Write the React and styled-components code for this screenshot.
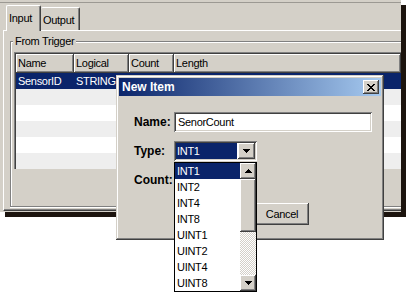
import styled, { createGlobalStyle, css } from 'styled-components'

const FACE = '#d4d0c8'
const NAVY = '#0a246a'

const GlobalStyle = createGlobalStyle`
  html, body {
    margin: 0;
    padding: 0;
    background: #fff;
  }
  body {
    font-family: "Liberation Sans", Arial, sans-serif;
    font-size: 11px;
    letter-spacing: -0.3px;
    color: #000;
  }
  * {
    box-sizing: border-box;
  }
`

const raised = css`
  background: ${FACE};
  box-shadow: inset -1px -1px #404040, inset 1px 1px #fff, inset -2px -2px #808080, inset 2px 2px ${FACE};
`

const sunken = css`
  box-shadow: inset 1px 1px #808080, inset -1px -1px #fff, inset 2px 2px #404040, inset -2px -2px ${FACE};
`

const Stage = styled.div`
  position: relative;
  width: 406px;
  height: 295px;
  overflow: hidden;
`

const Window = styled.div`
  width: 401px;
  height: 212px;
  background: ${FACE};
  box-shadow: 5px 5px 0 #1c140e;
  overflow: hidden;
  display: flex;
  flex-direction: column;
`

const TopRule = styled.div`
  height: 3px;
  border-bottom: 1px solid #9c9993;
`

const TabStrip = styled.div`
  height: 27px;
  display: flex;
  align-items: flex-end;
  padding-left: 6px;
  position: relative;
  z-index: 1;
`

const Tab = styled.div`
  width: ${(p) => p.$w}px;
  height: ${(p) => (p.$active ? 26 : 23)}px;
  margin-bottom: ${(p) => (p.$active ? -1 : 0)}px;
  padding: ${(p) => (p.$active ? '6px 0 0 2px' : '6px 0 0 2px')};
  line-height: 13px;
  background: ${FACE};
  border-top: 1px solid #fff;
  border-left: ${(p) => (p.$active ? '1px solid #fff' : 'none')};
  border-right: 1px solid #404040;
  border-radius: 2px 2px 0 0;
  box-shadow: inset -1px 0 #808080;
`

const TabPanel = styled.div`
  height: 181px;
  margin-left: 3px;
  border-top: 1px solid #fff;
  border-left: 1px solid #fff;
  border-bottom: 1px solid #404040;
  box-shadow: inset 0 -1px #808080;
  padding: 10px 0 0 6px;
`

const GroupBox = styled.div`
  position: relative;
  height: 166px;
  border: 1px solid #808080;
  border-right: none;
  box-shadow: inset 1px 1px #fff, 0 1px #fff;
  padding: 10px 0 0 3px;
`

const Legend = styled.span`
  position: absolute;
  top: -7px;
  left: 2px;
  padding: 0 2px;
  line-height: 13px;
  background: ${FACE};
`

const ListView = styled.div`
  height: 117px;
  background: #fff;
  border-top: 1px solid #808080;
  border-left: 1px solid #808080;
  box-shadow: inset 1px 1px #404040;
  padding: 1px 0 0 1px;
  overflow: hidden;
`

const columns = '58px 55px 45px 1fr'

const HeaderRow = styled.div`
  display: grid;
  grid-template-columns: ${columns};
  height: 19px;
`

const HeaderCell = styled.div`
  ${raised};
  padding-left: 2px;
  line-height: 18px;
  white-space: nowrap;
`

const Row = styled.div`
  display: grid;
  grid-template-columns: ${columns};
  height: 16px;
  line-height: 16px;
  background: ${(p) => (p.$selected ? NAVY : p.$odd ? '#eeeeee' : '#fff')};
  color: ${(p) => (p.$selected ? '#fff' : '#000')};
`

const Cell = styled.div`
  padding-left: 2px;
  white-space: nowrap;
`

const Dialog = styled.div`
  position: absolute;
  left: 116px;
  top: 75px;
  width: 268px;
  height: 165px;
  padding: 3px;
  background: ${FACE};
  box-shadow: inset -1px -1px #404040, inset 1px 1px ${FACE}, inset -2px -2px #808080, inset 2px 2px #fff;
`

const TitleBar = styled.div`
  height: 18px;
  display: flex;
  align-items: center;
  justify-content: space-between;
  padding-left: 3px;
  background: linear-gradient(to right, ${NAVY}, #a6caf0);
  color: #fff;
  font-weight: bold;
  font-size: 12px;
  letter-spacing: 0;
`

const CloseButton = styled.div`
  ${raised};
  width: 16px;
  height: 14px;
  margin-right: 2px;
  display: flex;
  align-items: center;
  justify-content: center;
`

const Form = styled.div`
  display: grid;
  grid-template-columns: 40px 198px;
  row-gap: 9px;
  align-items: center;
  padding: 16px 0 0 15px;
`

const Label = styled.div`
  font-weight: bold;
  font-size: 12px;
  letter-spacing: 0;
`

const TextInput = styled.div`
  ${sunken};
  height: 20px;
  background: #fff;
  padding-left: 4px;
  line-height: 20px;
`

const Combo = styled.div`
  ${sunken};
  position: relative;
  width: 83px;
  height: 20px;
  background: #fff;
  padding: 2px;
  display: flex;
  gap: 1px;
`

const ComboValue = styled.div`
  flex: 1;
  background: ${NAVY};
  color: #fff;
  padding-left: 1px;
  line-height: 16px;
`

const ArrowButton = styled.div`
  ${raised};
  width: ${(p) => p.$w || 16}px;
  height: 16px;
  display: flex;
  align-items: center;
  justify-content: center;
  flex-shrink: 0;
`

const SmallInput = styled.div`
  ${sunken};
  width: 50px;
  height: 20px;
  background: #fff;
`

const ButtonRow = styled.div`
  grid-column: 2;
  display: flex;
  gap: 6px;
  padding-left: 21px;
  margin-top: 4px;
`

const PushButton = styled.div`
  ${raised};
  width: 54px;
  height: 22px;
  line-height: 22px;
  text-align: center;
`

const DropList = styled.div`
  position: absolute;
  left: 0;
  top: calc(100% + 1px);
  width: 83px;
  height: 130px;
  border: 1px solid #000;
  background: #fff;
  display: flex;
  z-index: 2;
`

const Options = styled.div`
  flex: 1;
`

const Option = styled.div`
  height: 16px;
  line-height: 16px;
  padding-left: 2px;
  background: ${(p) => (p.$selected ? NAVY : '#fff')};
  color: ${(p) => (p.$selected ? '#fff' : '#000')};
`

const ScrollBar = styled.div`
  width: 16px;
  display: flex;
  flex-direction: column;
`

const Thumb = styled.div`
  ${raised};
  height: 53px;
`

const Track = styled.div`
  flex: 1;
  background: repeating-conic-gradient(${FACE} 0 25%, #fff 0 50%) 0 0 / 2px 2px;
`

const Triangle = ({ up }) => (
  <svg width="7" height="4" viewBox="0 0 7 4" shapeRendering="crispEdges">
    <path
      d={
        up
          ? 'M3 0h1v1H3zM2 1h3v1H2zM1 2h5v1H1zM0 3h7v1H0z'
          : 'M0 0h7v1H0zM1 1h5v1H1zM2 2h3v1H2zM3 3h1v1H3z'
      }
      fill="#000"
    />
  </svg>
)

const CloseGlyph = () => (
  <svg width="8" height="7" viewBox="0 0 8 7" shapeRendering="crispEdges">
    <path
      d="M0 0h2v1H0zM6 0h2v1H6zM1 1h2v1H1zM5 1h2v1H5zM2 2h4v1H2zM3 3h2v1H3zM2 4h4v1H2zM1 5h2v1H1zM5 5h2v1H5zM0 6h2v1H0zM6 6h2v1H6z"
      fill="#000"
    />
  </svg>
)

const types = ['INT1', 'INT2', 'INT4', 'INT8', 'UINT1', 'UINT2', 'UINT4', 'UINT8']

const fields = [
  { name: 'SensorID', logical: 'STRING', count: '', length: '' },
  {}, {}, {}, {}, {},
]

function App() {
  return (
    <Stage>
      <GlobalStyle />
      <Window>
        <TopRule />
        <TabStrip>
          <Tab $active $w={35}>Input</Tab>
          <Tab $w={39}>Output</Tab>
        </TabStrip>
        <TabPanel>
          <GroupBox>
            <Legend>From Trigger</Legend>
            <ListView>
              <HeaderRow>
                <HeaderCell>Name</HeaderCell>
                <HeaderCell>Logical</HeaderCell>
                <HeaderCell>Count</HeaderCell>
                <HeaderCell>Length</HeaderCell>
              </HeaderRow>
              {fields.map((f, i) => (
                <Row key={i} $selected={i === 0} $odd={i % 2 === 1}>
                  <Cell>{f.name}</Cell>
                  <Cell>{f.logical}</Cell>
                  <Cell>{f.count}</Cell>
                  <Cell>{f.length}</Cell>
                </Row>
              ))}
            </ListView>
          </GroupBox>
        </TabPanel>
      </Window>

      <Dialog>
        <TitleBar>
          New Item
          <CloseButton>
            <CloseGlyph />
          </CloseButton>
        </TitleBar>
        <Form>
          <Label>Name:</Label>
          <TextInput>SenorCount</TextInput>
          <Label>Type:</Label>
          <div>
            <Combo>
              <ComboValue>INT1</ComboValue>
              <ArrowButton $w={17}>
                <Triangle />
              </ArrowButton>
              <DropList>
                <Options>
                  {types.map((t, i) => (
                    <Option key={t} $selected={i === 0}>{t}</Option>
                  ))}
                </Options>
                <ScrollBar>
                  <ArrowButton>
                    <Triangle up />
                  </ArrowButton>
                  <Thumb />
                  <Track />
                  <ArrowButton>
                    <Triangle />
                  </ArrowButton>
                </ScrollBar>
              </DropList>
            </Combo>
          </div>
          <Label>Count:</Label>
          <SmallInput />
          <ButtonRow>
            <PushButton>OK</PushButton>
            <PushButton>Cancel</PushButton>
          </ButtonRow>
        </Form>
      </Dialog>
    </Stage>
  )
}

export default App
